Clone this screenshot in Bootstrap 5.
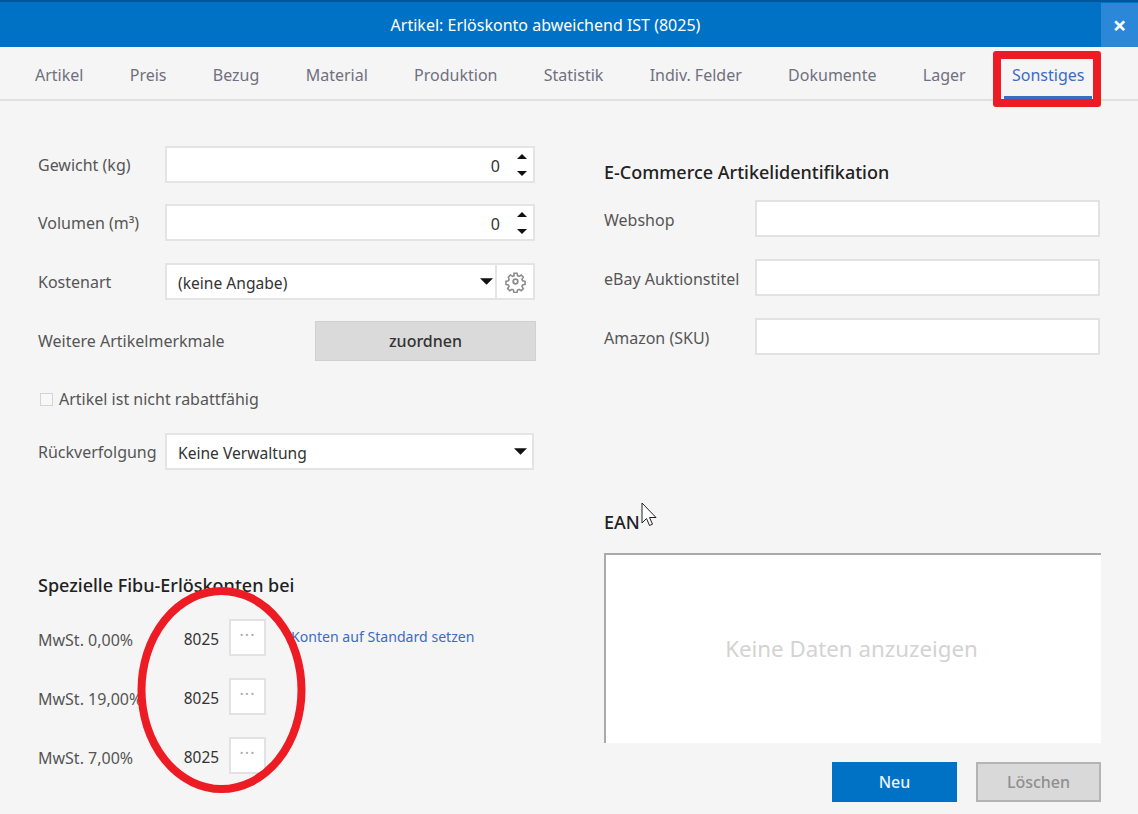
<!doctype html>
<html lang="de"><head><meta charset="utf-8"><title>Artikel</title>
<link href="https://cdn.jsdelivr.net/npm/bootstrap@5.3.0/dist/css/bootstrap.min.css" rel="stylesheet">
<style>
html,body{height:100%}
body{background:#f5f5f5;font-family:"Noto Sans","Open Sans",sans-serif;font-size:16px;color:#555;overflow:hidden;position:relative;width:1138px;height:814px}
.titlebar{height:47px;background:#0072c6;border-top:2px solid #00569a;color:#fff}
.titlebar .ttl{flex:1;text-align:center;padding-right:10px}
.closebx{width:37px;height:44px;margin-top:1px;background:#2b88d8;border:0;color:#fff;font-size:24px;font-weight:700;line-height:1;padding:0}
.tabbar{height:54px;border-top:1px solid #fff;border-bottom:2px solid #e0e0e0;padding-left:27px;gap:30.3px;flex-wrap:nowrap}
.tabbar .nav-link{color:#70707f;padding:0 8px;height:51px;line-height:54px;border-bottom:3px solid transparent}
.tabbar .nav-link.active{color:#3b6cc4;border-bottom-color:#3b6cc4}
.leftcol{width:604px;padding-left:38px;flex:none}
.rightcol{width:497px;flex:none}
.frow{display:flex;align-items:center;height:37px}
.lbl{width:127px;flex:none;white-space:nowrap}
.rlbl{width:151px;flex:none;white-space:nowrap;padding-top:2px}
.spin{width:370px;height:37px;background:#fff;border:2px solid #e4e4e4;display:flex;align-items:center}
.spin input{flex:1;border:0;outline:0;background:transparent;text-align:right;color:#333;min-width:0;padding:2px 0 0}
.arrows{width:33px;display:flex;flex-direction:column;align-items:center;gap:12px;padding-left:11px}
.tri-u{width:0;height:0;border:5px solid transparent;border-top:0;border-bottom:5px solid #111}
.tri-d{width:0;height:0;border:5px solid transparent;border-bottom:0;border-top:5px solid #111}
.fsel{border-radius:0;border:2px solid #e4e4e4;height:37px;padding:2px 30px 0 11px;font-size:15.6px;color:#333;line-height:33px;background-size:13px 7px;background-position:right 5px center;
background-image:url("data:image/svg+xml,%3csvg xmlns='http://www.w3.org/2000/svg' viewBox='0 0 12 6'%3e%3cpath d='M0 0h12L6 6z' fill='%23111'/%3e%3c/svg%3e")}
.fsel-k{background-position:right 2px center}
.fsel-r{width:369px;flex:none}
.kgroup{width:370px}
.merk{width:277px;flex:none;white-space:nowrap}
.gearbtn{width:38px;height:37px;background:#fff;border:2px solid #e4e4e4;border-left:0;display:flex;align-items:center;justify-content:center;padding:0;flex:none}
.zuord{width:221px;height:40px;background:#dadada;border:1px solid #d0d0d0;border-radius:0;color:#333;font-weight:500;font-size:16px;padding:0}
.form-check-input.chk{width:13px;height:13px;border:1px solid #d4d4d4;background-color:#f8f8f8;border-radius:0;margin:0 6px 0 2px;opacity:1;flex:none}
.chk~label{opacity:1!important}
.hd{font-size:18px;font-weight:500;color:#222;margin:0;line-height:24px}
.dots{width:37px;height:37px;background:#fff;border:2px solid #e2e2e2;border-radius:0;color:#aaa;padding:0 0 6px;font-size:16px;letter-spacing:1px;line-height:1;flex:none}
.acct{width:113px;flex:none;white-space:nowrap;padding-top:4px}
.num{width:68px;flex:none;text-align:right;color:#333;margin-right:10px;font-size:15.4px;padding-top:4px}
.stdlink{color:#3b6cc4;text-decoration:none;font-size:14.1px;margin-left:25px;white-space:nowrap;position:relative;top:-1px}
.rinput{width:345px;height:37px;border-radius:0;border:2px solid #e2e2e2}
.eanbox{height:190px;background:#fff;border-top:2px solid #aaa;border-left:2px solid #aaa;color:#d3d3d3;font-size:22.3px;margin-top:19px;padding:0 4px 0 0}
.bneu{width:125px;height:40px;background:#0072c6;border:1px solid #0072c6;color:#e8f3fb;border-radius:0;padding:0;font-weight:500;font-size:16px}
.btn.bdel:disabled{width:125px;height:40px;background:#d9d9d9;border:2px solid #b4b4b4;color:#8f8f8f;border-radius:0;padding:0;font-weight:500;font-size:16px;opacity:1}
.btnbar{margin-top:19px;gap:19px}
.mark-rect{position:absolute;left:993px;top:51px;width:108px;height:56px;border:8px solid #ed1c24;border-radius:3px;pointer-events:none}
.mark-oval{position:absolute;left:136px;top:584px;pointer-events:none}
.cursor{position:absolute;left:641px;top:502px;pointer-events:none}
.mt45{margin-top:45px}.mt22{margin-top:22px}.mt21{margin-top:21px}.mt20{margin-top:20px}
.chkrow{margin-top:24px;height:28px}
.hd1{margin-top:103px}
.r1{margin-top:22px}
.r2{margin-top:22px}
.hdr{margin-top:59px}
.rr1{margin-top:16px}
.hde{margin-top:155px}
</style></head>
<body>
<div class="titlebar d-flex align-items-center">
  <div class="ttl">Artikel: Erlöskonto abweichend IST (8025)</div>
  <button class="closebx" type="button">×</button>
</div>
<ul class="nav tabbar">
  <li class="nav-item"><a class="nav-link" href="#">Artikel</a></li>
  <li class="nav-item"><a class="nav-link" href="#">Preis</a></li>
  <li class="nav-item"><a class="nav-link" href="#">Bezug</a></li>
  <li class="nav-item"><a class="nav-link" href="#">Material</a></li>
  <li class="nav-item"><a class="nav-link" href="#">Produktion</a></li>
  <li class="nav-item"><a class="nav-link" href="#">Statistik</a></li>
  <li class="nav-item"><a class="nav-link" href="#">Indiv. Felder</a></li>
  <li class="nav-item"><a class="nav-link" href="#">Dokumente</a></li>
  <li class="nav-item"><a class="nav-link" href="#">Lager</a></li>
  <li class="nav-item"><a class="nav-link active" href="#">Sonstiges</a></li>
</ul>
<div class="d-flex">
  <div class="leftcol">
    <div class="frow mt45"><span class="lbl">Gewicht (kg)</span>
      <div class="spin"><input type="text" value="0" aria-label="Gewicht"><div class="arrows"><span class="tri-u"></span><span class="tri-d"></span></div></div></div>
    <div class="frow mt21"><span class="lbl">Volumen (m³)</span>
      <div class="spin"><input type="text" value="0" aria-label="Volumen"><div class="arrows"><span class="tri-u"></span><span class="tri-d"></span></div></div></div>
    <div class="frow mt22"><span class="lbl">Kostenart</span>
      <div class="d-flex kgroup"><select class="form-select fsel fsel-k" aria-label="Kostenart"><option>(keine Angabe)</option></select>
      <button class="gearbtn" type="button" aria-label="Einstellungen"><svg width="23" height="23" viewBox="0 0 24 24" fill="none" stroke="#8a8a8a" stroke-width="1.8"><circle cx="12" cy="12" r="2.4"/><path d="M10.2 2.5h3.6l.6 2.9 1.7.7 2.5-1.6 2.5 2.5-1.6 2.5.7 1.7 2.9.6v3.6l-2.9.6-.7 1.7 1.6 2.5-2.5 2.5-2.5-1.6-1.7.7-.6 2.9h-3.6l-.6-2.9-1.7-.7-2.5 1.6-2.5-2.5 1.6-2.5-.7-1.7-2.9-.6v-3.6l2.9-.6.7-1.7L3.7 6.9l2.5-2.5 2.5 1.6 1.7-.7z" transform="translate(1.2 1.2) scale(.9)"/></svg></button></div></div>
    <div class="d-flex align-items-center mt21"><span class="merk">Weitere Artikelmerkmale</span><button class="btn zuord" type="button">zuordnen</button></div>
    <div class="d-flex align-items-center chkrow"><input class="form-check-input chk" type="checkbox" disabled id="rb"><label for="rb">Artikel ist nicht rabattfähig</label></div>
    <div class="frow mt20"><span class="lbl">Rückverfolgung</span>
      <select class="form-select fsel fsel-r" aria-label="Rückverfolgung"><option>Keine Verwaltung</option></select></div>
    <h2 class="hd hd1">Spezielle Fibu-Erlöskonten bei</h2>
    <div class="d-flex align-items-center r1"><span class="acct">MwSt. 0,00%</span><span class="num">8025</span><button class="btn dots" type="button">···</button><a class="stdlink" href="#">Konten auf Standard setzen</a></div>
    <div class="d-flex align-items-center r2"><span class="acct">MwSt. 19,00%</span><span class="num">8025</span><button class="btn dots" type="button">···</button></div>
    <div class="d-flex align-items-center r2"><span class="acct">MwSt. 7,00%</span><span class="num">8025</span><button class="btn dots" type="button">···</button></div>
  </div>
  <div class="rightcol">
    <h2 class="hd hdr">E-Commerce Artikelidentifikation</h2>
    <div class="d-flex align-items-center rr1"><span class="rlbl">Webshop</span><input class="form-control rinput" aria-label="Webshop"></div>
    <div class="d-flex align-items-center mt22"><span class="rlbl">eBay Auktionstitel</span><input class="form-control rinput" aria-label="eBay"></div>
    <div class="d-flex align-items-center mt22"><span class="rlbl">Amazon (SKU)</span><input class="form-control rinput" aria-label="Amazon"></div>
    <h2 class="hd hde">EAN</h2>
    <div class="eanbox d-flex align-items-center justify-content-center">Keine Daten anzuzeigen</div>
    <div class="d-flex justify-content-end btnbar"><button class="btn bneu" type="button">Neu</button><button class="btn bdel" type="button" disabled>Löschen</button></div>
  </div>
</div>
<div class="mark-rect"></div>
<svg class="mark-oval" width="172" height="212" viewBox="0 0 172 212" fill="none"><ellipse cx="85.5" cy="106" rx="80" ry="99" stroke="#ed1c24" stroke-width="8"/></svg>
<svg class="cursor" width="16" height="26" viewBox="0 0 16 26"><path d="M1 1v20l4.5-4.5 3 7 3-1.3-3-6.7H15z" fill="#fff" stroke="#222" stroke-width="1"/></svg>
</body></html>
